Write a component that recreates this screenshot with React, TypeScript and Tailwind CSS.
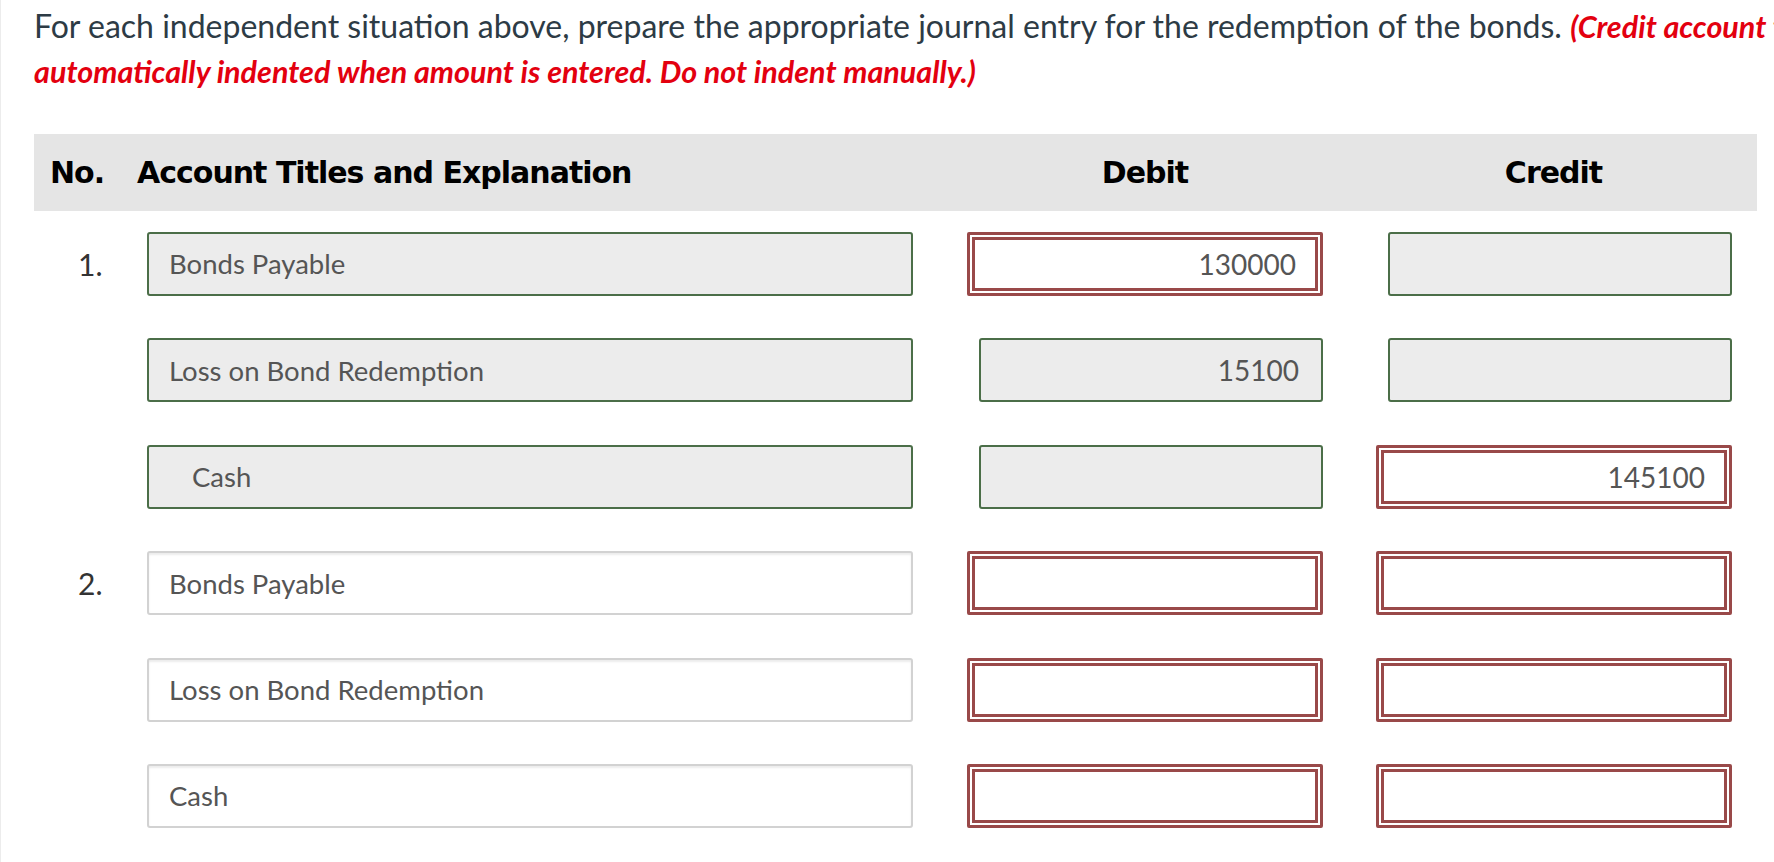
import React from "react";

type Cell = { kind: "green" | "red" | "white"; value?: string };
type Row = { no?: string; account: Cell & { text: string; indent?: boolean }; debit: Cell; credit: Cell };

const rows: Row[] = [
  { no: "1.", account: { kind: "green", text: "Bonds Payable" }, debit: { kind: "red", value: "130000" }, credit: { kind: "green" } },
  { account: { kind: "green", text: "Loss on Bond Redemption" }, debit: { kind: "green", value: "15100" }, credit: { kind: "green" } },
  { account: { kind: "green", text: "Cash", indent: true }, debit: { kind: "green" }, credit: { kind: "red", value: "145100" } },
  { no: "2.", account: { kind: "white", text: "Bonds Payable" }, debit: { kind: "red" }, credit: { kind: "red" } },
  { account: { kind: "white", text: "Loss on Bond Redemption" }, debit: { kind: "red" }, credit: { kind: "red" } },
  { account: { kind: "white", text: "Cash" }, debit: { kind: "red" }, credit: { kind: "red" } },
];

function AmountBox({ cell }: { cell: Cell }) {
  if (cell.kind === "red") {
    return (
      <div className="w-[356px] h-[64px] rounded-[2px] border-[3px] border-[#994949] bg-white shadow-[inset_0_0_0_2px_#ffffff,inset_0_0_0_5px_#994949] flex items-center justify-end pr-[24px] text-[28px] text-[#555]">
        {cell.value}
      </div>
    );
  }
  return (
    <div className="w-[344px] h-[64px] rounded-[3px] border-2 border-[#4b6e48] bg-[#ececec] flex items-center justify-end pr-[22px] text-[28px] text-[#555]">
      {cell.value}
    </div>
  );
}

export default function App() {
  return (
    <div
      className="w-[1774px] h-[862px] overflow-hidden bg-white border-l border-[#ececec]"
      style={{ fontFamily: "Lato, 'Open Sans', sans-serif" }}
    >
      <div className="pl-[33px] pt-[3px] leading-[45px]">
        <div className="whitespace-nowrap text-[32px] text-[#2d3b45]">
          For each independent situation above, prepare the appropriate journal entry for the redemption of the bonds.{" "}
          <span className="font-bold italic text-[30.5px] text-[#e3000f]">(Credit account titles are</span>
        </div>
        <div className="whitespace-nowrap font-bold italic text-[30.5px] text-[#e3000f]">
          automatically indented when amount is entered. Do not indent manually.)
        </div>
      </div>

      <div className="ml-[33px] mt-[40px] w-[1723px] h-[77px] bg-[#e5e5e5] flex items-center text-black font-bold text-[30px] tracking-[-1px]"
        style={{ fontFamily: "'DejaVu Sans', Verdana, sans-serif" }}>
        <div className="w-[103px] pl-[16px]">No.</div>
        <div className="w-[776px]">Account Titles and Explanation</div>
        <div className="ml-[54px] w-[356px] text-center">Debit</div>
        <div className="ml-[52px] w-[357px] text-center">Credit</div>
      </div>

      <div className="ml-[33px] pt-[21px] flex flex-col gap-[42.4px]">
        {rows.map((r, i) => (
          <div key={i} className="flex items-center h-[64px]">
            <div className="w-[113px] pl-[44px] text-[30px] text-[#333]">{r.no}</div>
            <div
              className={
                r.account.kind === "green"
                  ? "w-[766px] h-[64px] rounded-[3px] border-2 border-[#4b6e48] bg-[#ececec] flex items-center text-[27.5px] text-[#555] " +
                    (r.account.indent ? "pl-[43px]" : "pl-[20px]")
                  : "w-[766px] h-[64px] rounded-[3px] border-2 border-[#d2d2d2] bg-white shadow-[inset_0_2px_2px_rgba(0,0,0,0.08)] flex items-center pl-[20px] text-[27.5px] text-[#555]"
              }
            >
              {r.account.text}
            </div>
            <div className="ml-[54px] w-[356px] flex justify-end">
              <AmountBox cell={r.debit} />
            </div>
            <div className="ml-[52px] w-[357px] flex justify-end">
              <AmountBox cell={r.credit} />
            </div>
          </div>
        ))}
      </div>
    </div>
  );
}
